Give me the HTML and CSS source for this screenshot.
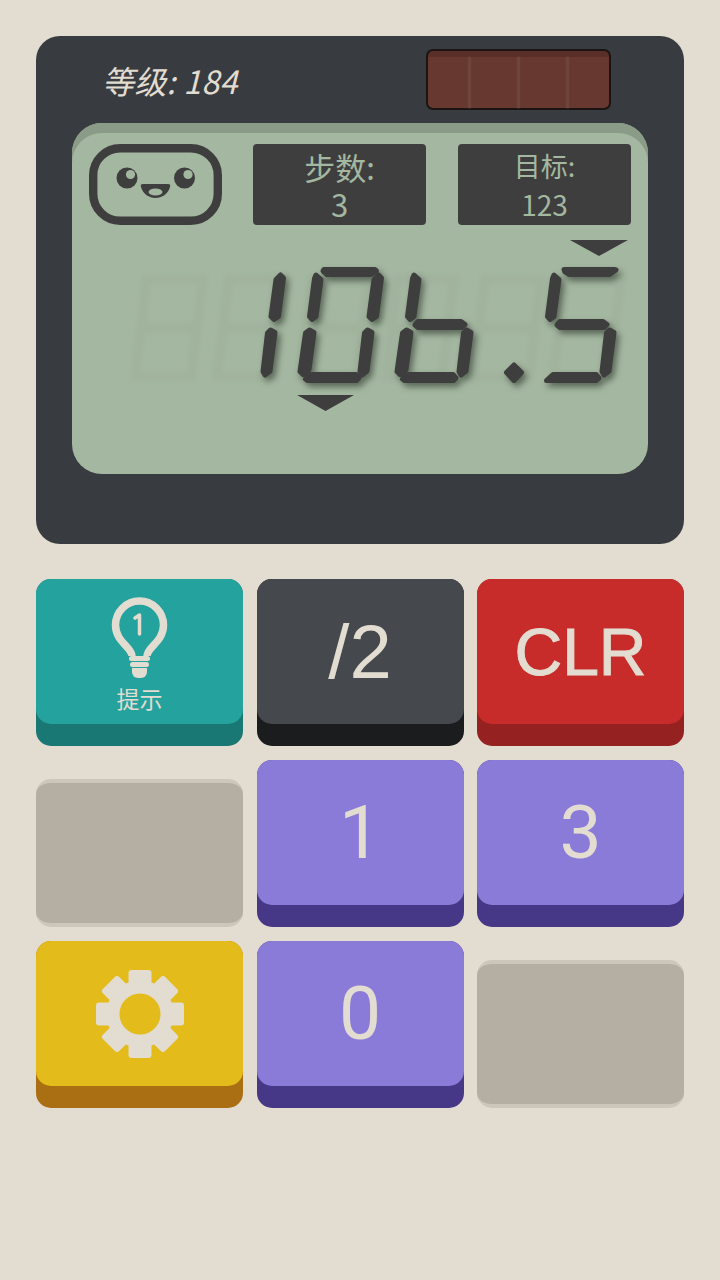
FILE: index.html
```html
<!DOCTYPE html>
<html lang="zh-CN">
<head>
<meta charset="utf-8">
<title>Calculator</title>
<link rel="stylesheet" href="styles.css">
</head>
<body>
<section class="panel">
  <header class="panel-top">
    <div class="level">等级: 184</div>
    <div class="solar"><i></i><i></i><i></i></div>
  </header>
  <div class="lcd">
    <div class="lcd-top">
      <svg class="face" viewBox="89 144 133 81" width="133" height="81">
        <rect x="93.2" y="148.2" width="124.6" height="72.6" rx="27" fill="none" stroke="#3e3e3e" stroke-width="8.4"/>
        <circle cx="127" cy="178" r="10.5" fill="#3e3e3e"/>
        <circle cx="130.5" cy="174.5" r="4.6" fill="#a4b7a0"/>
        <circle cx="184.5" cy="178" r="10.5" fill="#3e3e3e"/>
        <circle cx="188" cy="174.5" r="4.6" fill="#a4b7a0"/>
        <path d="M143 184H168Q171 184 170 187C168 194 162 198 155.500 198C149 198 143 194 141 187Q140 184 143 184Z" fill="#3e3e3e"/>
        <ellipse cx="155.500" cy="192" rx="7" ry="3.500" fill="#a4b7a0"/>
      </svg>
      <div class="stat stat-steps"><span>步数:</span><span>3</span></div>
      <div class="stat stat-goal"><span class="goal-label">目标:</span><span>123</span></div>
    </div>
    <svg class="display" viewBox="72 232 576 190" width="576" height="190">
      <defs>
        <g id="a"><polygon points="324,269.500 375,269.500 376.500,271 371,274.500 327,274.500 323,271"/></g>
        <g id="f"><polygon points="316,275 321,279.500 316,316.500 312,319.500 309.500,316.500 314.500,278.500"/></g>
        <g id="b"><polygon points="378.500,275 381.500,278 376.500,316.500 372,319.500 369,316.500 374,279.500"/></g>
        <g id="g"><polygon points="321,321.500 364,321.500 368,324.500 365,327.500 321,327.500 318,325"/></g>
        <g id="e"><polygon points="309.500,330 314,332.500 309,369.500 303,374.500 300,371.500 305.500,333"/></g>
        <g id="c"><polygon points="367.500,330 372,332.500 367,371 362,375 360,371.500 364.500,333"/></g>
        <g id="d"><polygon points="309,374.500 356,374.500 359,378 356.500,380.500 307.500,380.500 305.500,379"/></g>
        <g id="ghost">
          <path d="M0 0H56L50 48H-6ZM-6 50H50L44 98H-12Z" fill="none" stroke="#3e3e3e" stroke-width="10"/>
        </g>
      </defs>
      <g class="ghosts">
        <use href="#ghost" x="147" y="279"/>
        <use href="#ghost" x="229" y="279"/>
        <use href="#ghost" x="312" y="279"/>
        <use href="#ghost" x="398" y="279"/>
        <use href="#ghost" x="485" y="279"/>
        <use href="#ghost" x="565" y="279"/>
      </g>
      <g class="segments">
        <use href="#b" x="-98"/><use href="#c" x="-97"/>
        <use href="#a"/><use href="#f"/><use href="#b"/><use href="#e"/><use href="#c"/><use href="#d"/>
        <use href="#f" x="98"/><use href="#g" x="97"/><use href="#e" x="97"/><use href="#c" x="99"/><use href="#d" x="97"/>
        <polygon points="506.500,372.500 514,365 521.500,372.500 514,380.500"/>
        <polygon points="564,269.500 614,269.500 616,270 609.500,274.500 569,274.500 565,272"/>
        <use href="#f" x="238"/><use href="#g" x="239"/><use href="#c" x="242"/>
        <polygon points="553,374.500 596,374.500 599,378 596,380.500 549,380.500 546.500,380.500"/>
      </g>
      <g class="arrows">
        <polygon points="570,240 628,240 599,256"/>
        <polygon points="297,395 354,395 325.500,411"/>
      </g>
    </svg>
  </div>
</section>
<main class="keys">
  <button class="key key-teal"><span class="cap cap-hint">
    <svg class="bulb" viewBox="105 592 70 92" width="70" height="92">
      <path d="M132 656C132 647 115.500 642 115.500 625A24 24 0 0 1 163.500 625C163.500 642 147 647 147 656" fill="none" stroke="#e3dcd0" stroke-width="7.500"/>
      <path d="M135 618l4.500-3v19" fill="none" stroke="#e3dcd0" stroke-width="3.500" stroke-linecap="round" stroke-linejoin="round"/>
      <rect x="129" y="656" width="21" height="5" rx="2.500" fill="#e3dcd0"/>
      <rect x="130" y="662" width="19" height="5" rx="2.500" fill="#e3dcd0"/>
      <path d="M132 668H147V672A6 6 0 0 1 141 678H138A6 6 0 0 1 132 672Z" fill="#e3dcd0"/>
    </svg>
    <span class="hint-label">提示</span>
  </span></button>
  <button class="key key-dark"><span class="cap cap-half">/2</span></button>
  <button class="key key-red"><span class="cap cap-clr">CLR</span></button>
  <div class="key-empty"></div>
  <button class="key key-purple"><span class="cap">1</span></button>
  <button class="key key-purple"><span class="cap">3</span></button>
  <button class="key key-yellow"><span class="cap">
    <svg class="gear" viewBox="-46 -46 92 92" width="92" height="92">
      <circle r="27" fill="none" stroke="#e3dcd0" stroke-width="13"/>
      <g fill="#e3dcd0">
        <rect x="-11.500" y="-44" width="23" height="18" rx="3"/>
        <rect x="-11.500" y="-44" width="23" height="18" rx="3" transform="rotate(45)"/>
        <rect x="-11.500" y="-44" width="23" height="18" rx="3" transform="rotate(90)"/>
        <rect x="-11.500" y="-44" width="23" height="18" rx="3" transform="rotate(135)"/>
        <rect x="-11.500" y="-44" width="23" height="18" rx="3" transform="rotate(180)"/>
        <rect x="-11.500" y="-44" width="23" height="18" rx="3" transform="rotate(225)"/>
        <rect x="-11.500" y="-44" width="23" height="18" rx="3" transform="rotate(270)"/>
        <rect x="-11.500" y="-44" width="23" height="18" rx="3" transform="rotate(315)"/>
      </g>
    </svg>
  </span></button>
  <button class="key key-purple"><span class="cap">0</span></button>
  <div class="key-empty"></div>
</main>
</body>
</html>
```

FILE: styles.css
```css
* { box-sizing: border-box; }
html, body { margin: 0; height: 1280px; overflow: hidden; }
body {
  background: #e3dcd0;
  padding: 36px;
  font-family: "Noto Sans CJK SC", "Noto Sans", sans-serif;
}
.panel {
  height: 508px;
  padding: 0 36px;
  background: #383c40;
  border-radius: 24px;
}
.panel-top {
  display: flex;
  justify-content: space-between;
  align-items: center;
  padding: 13px 37px 13px 30px;
}
.level {
  color: #e3dcd0;
  font-size: 32px;
  font-style: italic;
  line-height: 46px;
  letter-spacing: .3px;
}
.solar {
  width: 185px;
  height: 61px;
  display: flex;
  justify-content: center;
  gap: 46px;
  background: linear-gradient(#5a2f28 0 6px, #663830 6px);
  border: 2.500px solid #1b1412;
  border-radius: 7px;
}
.solar i {
  width: 3px;
  margin-top: 6px;
  background: #704539;
  box-shadow: 0 0 2px #704539;
}
.lcd {
  height: 351px;
  background: #a4b7a0;
  border-radius: 30px;
  box-shadow: inset 0 10px 0 #8a9c87;
}
.lcd-top {
  display: flex;
  gap: 31px;
  padding: 21px 17px 0;
}
.face { display: block; flex: none; }
.stat {
  width: 173px;
  height: 81px;
  display: flex;
  flex-direction: column;
  align-items: center;
  justify-content: center;
  background: #3e3e3e;
  border-radius: 4px;
  color: #a4b7a0;
}
.stat-goal { margin-left: 1px; }
.stat span { display: block; }
.stat-steps { font-size: 31px; }
.stat-steps span { line-height: 37px; }
.stat-goal { font-size: 28px; }
.stat-goal span { line-height: 39px; }
.stat-goal .goal-label { font-size: 27px; }
.display { display: block; margin-top: 7px; overflow: visible; }
.ghosts { opacity: .028; filter: blur(2px); }
.segments {
  fill: #3e3e3e;
  stroke: #3e3e3e;
  stroke-width: 5;
  stroke-linejoin: round;
  filter: drop-shadow(3px 4px 3px rgba(30, 40, 30, .55));
}
.arrows { fill: #3e3e3e; }
.keys {
  display: grid;
  grid-template-columns: repeat(3, 1fr);
  grid-auto-rows: 167px;
  column-gap: 13.500px;
  row-gap: 14px;
  margin-top: 35px;
}
.key {
  display: flex;
  align-items: flex-start;
  width: 100%;
  height: 167px;
  padding: 0;
  border: 0;
  border-radius: 15px;
  background: var(--edge);
  color: #e3dcd0;
  font-family: Roboto, "Liberation Sans", sans-serif;
}
.cap {
  display: flex;
  flex: 1;
  align-items: center;
  justify-content: center;
  height: 145px;
  background: var(--top);
  border-radius: 15px;
  font-size: 75px;
  line-height: 1;
}
.cap-half {
  font-family: "Liberation Sans", Arial, sans-serif;
  font-size: 76px;
}
.cap-clr {
  font-family: "Liberation Sans", Arial, sans-serif;
  font-size: 66px;
  -webkit-text-stroke: 1px #e3dcd0;
}
.cap-hint { flex-direction: column; justify-content: flex-start; }
.bulb { display: block; margin-top: 13px; margin-bottom: -1px; }
.hint-label {
  font-family: "Noto Sans CJK SC", sans-serif;
  font-size: 23px;
  line-height: 30px;
}
.gear { display: block; }
.key-teal { --top: #24a29e; --edge: #1a7874; }
.key-dark { --top: #45494d; --edge: #1a1c1e; }
.key-red { --top: #c82c2a; --edge: #952220; }
.key-purple { --top: #8b7bd8; --edge: #463886; }
.key-yellow { --top: #e3bb1a; --edge: #ab6f13; }
.key-empty {
  align-self: end;
  height: 148px;
  background: #b5aea3;
  border-top: 4px solid #cdc6ba;
  border-bottom: 4px solid #cdc6ba;
  border-radius: 15px;
}
```
